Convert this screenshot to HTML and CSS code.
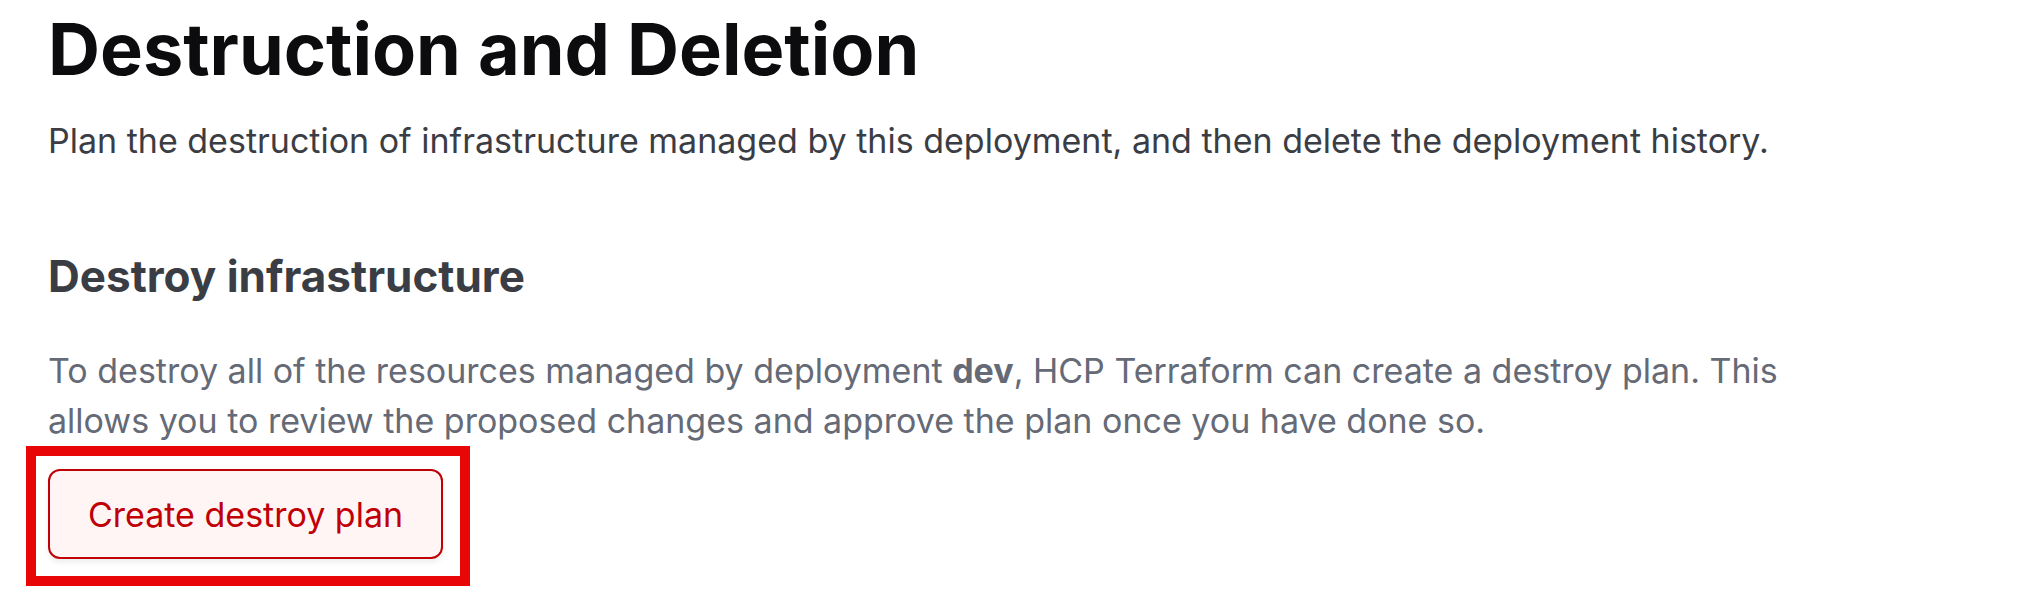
FILE: index.html
```html
<!DOCTYPE html>
<html lang="en">
<head>
<meta charset="utf-8">
<title>Destruction and Deletion</title>
<link rel="stylesheet" href="styles.css">
</head>
<body>
<main class="page">
  <header class="intro">
    <h1 class="title">Destruction and Deletion</h1>
    <p class="lead">Plan the destruction of infrastructure managed by this deployment, and then delete the deployment history.</p>
  </header>
  <section class="section">
    <h2 class="subtitle">Destroy infrastructure</h2>
    <p class="description">To destroy all of the resources managed by deployment <strong>dev</strong>, HCP Terraform can create a destroy plan. This allows you to review the proposed changes and approve the plan once you have done so.</p>
    <div class="highlight">
      <button class="button" type="button">Create destroy plan</button>
    </div>
  </section>
</main>
</body>
</html>
```

FILE: styles.css
```css
* {
  box-sizing: border-box;
}

body {
  margin: 0;
  background: #fff;
  font-family: Inter, "Liberation Sans", sans-serif;
}

.page {
  padding: 0 48px;
}

.title {
  margin: 0;
  color: #0c0c0e;
  font-size: 72px;
  line-height: 98px;
  font-weight: 700;
}

.lead {
  margin: 18px 0 0;
  color: #3b3d45;
  font-size: 34px;
  line-height: 50px;
}

.subtitle {
  margin: 80px 0 0;
  color: #3b3d45;
  font-size: 44px;
  line-height: 60px;
  font-weight: 700;
}

.description {
  max-width: 1780px;
  margin: 40px 0 0;
  color: #656a76;
  font-size: 34px;
  line-height: 50px;
}

.description strong {
  font-weight: 700;
}

.highlight {
  width: fit-content;
  margin: 0 0 0 -22px;
  padding: 13px 17px 17px 12px;
  border: 10px solid #e90606;
}

.button {
  display: block;
  padding: 21px 38px 19px;
  border: 2px solid #c00005;
  border-radius: 12px;
  background: #fff5f5;
  box-shadow: 0 4px 4px rgba(101, 106, 118, 0.1);
  color: #c00005;
  font-family: inherit;
  font-size: 34px;
  line-height: 46px;
}
```
